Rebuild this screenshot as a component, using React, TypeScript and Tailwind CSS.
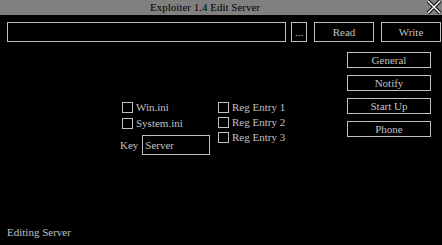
import React from "react";

const serif = "font-['Liberation_Serif','Times_New_Roman',serif]";

function Box({ label }: { label: string }) {
  return (
    <div className="flex h-[15px] items-center gap-[3px]">
      <span className="h-[11px] w-[11px] shrink-0 border border-[#c0c0c0]" />
      <span className="leading-none">{label}</span>
    </div>
  );
}

function Btn({ label, className }: { label: string; className: string }) {
  return (
    <div className={`flex shrink-0 items-center justify-center border border-[#c0c0c0] leading-none ${className}`}>
      {label}
    </div>
  );
}

export default function App() {
  return (
    <div className={`flex h-[245px] w-[442px] flex-col bg-black text-[11px] text-[#c0c0c0] ${serif}`}>
      <div className="relative flex h-[15px] items-center justify-center bg-[#808080] pr-[32px] text-black">
        Exploiter 1.4 Edit Server
        <svg className="absolute right-0 top-0" width="16" height="15" viewBox="0 0 16 15">
          <path d="M2 1 L14 13 M14 1 L2 13" stroke="#000" strokeWidth="3.5" />
          <path d="M2 1 L14 13 M14 1 L2 13" stroke="#fff" strokeWidth="1.5" />
        </svg>
      </div>

      <div className="flex flex-1 flex-col pl-[7px] pr-[1px] pt-[7px]">
        <div className="flex h-[20px]">
          <div className="w-[279px] shrink-0 border border-[#c0c0c0]" />
          <Btn label="..." className="ml-[5px] w-[16px] items-end pb-[3px]" />
          <Btn label="Read" className="ml-[7px] w-[60px]" />
          <Btn label="Write" className="ml-[7px] w-[60px]" />
        </div>

        <div className="flex">
          <div className="flex flex-1 pl-[115px] pt-[58px]">
            <div className="flex w-[96px] flex-col">
              <Box label="Win.ini" />
              <div className="mt-[1px]">
                <Box label="System.ini" />
              </div>
              <div className="ml-[-2px] mt-[4px] flex h-[20px] items-center gap-[4px]">
                <span>Key</span>
                <div className="flex h-[20px] w-[68px] items-center border border-[#c0c0c0] pl-[2px]">
                  Server
                </div>
              </div>
            </div>
            <div className="flex flex-col">
              <Box label="Reg Entry 1" />
              <Box label="Reg Entry 2" />
              <Box label="Reg Entry 3" />
            </div>
          </div>
          <div className="mr-[10px] mt-[10px] flex w-[84px] flex-col gap-[7px]">
            <Btn label="General" className="h-[16px]" />
            <Btn label="Notify" className="h-[16px]" />
            <Btn label="Start Up" className="h-[16px]" />
            <Btn label="Phone" className="h-[16px]" />
          </div>
        </div>
      </div>

      <div className="px-[7px] pb-[6px] leading-[13px]">Editing Server</div>
    </div>
  );
}
